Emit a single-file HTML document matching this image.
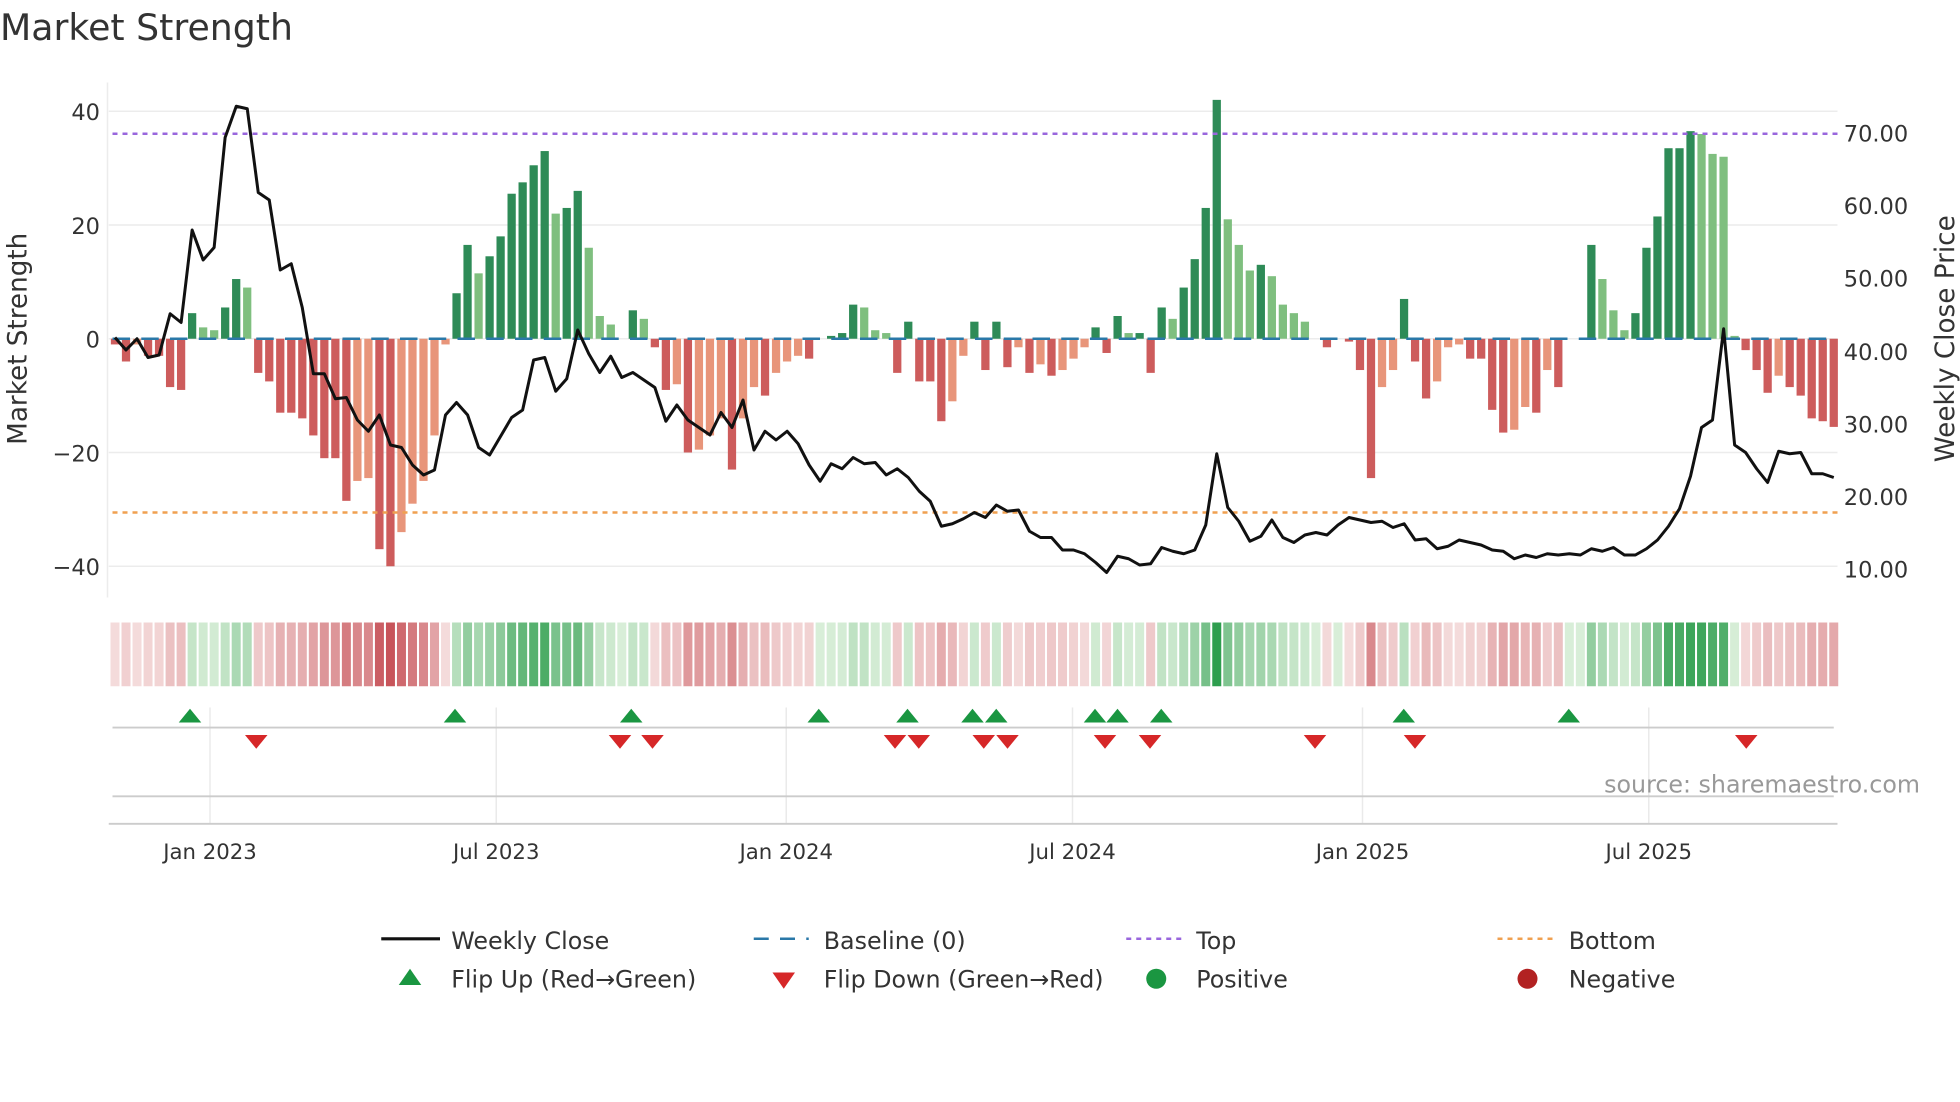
<!DOCTYPE html>
<html><head><meta charset="utf-8"><style>
html,body{margin:0;padding:0;background:#fff;width:1960px;height:1102px;overflow:hidden}
svg{display:block}
text{font-family:"DejaVu Sans","Liberation Sans",sans-serif;fill:#333}
</style></head><body>
<svg id="s" width="1960" height="1102" viewBox="0 0 1568 881.6" xmlns="http://www.w3.org/2000/svg">
<rect width="1568" height="882" fill="#fff"/>
<text x="0" y="32" font-size="29">Market Strength</text>
<g stroke="#ececec" stroke-width="1.2">
<line x1="87" y1="89" x2="1470" y2="89"/><line x1="87" y1="180" x2="1470" y2="180"/><line x1="87" y1="271" x2="1470" y2="271"/><line x1="87" y1="362" x2="1470" y2="362"/><line x1="87" y1="453" x2="1470" y2="453"/>
<line x1="86" y1="66" x2="86" y2="478"/>
</g>
<g font-size="18" text-anchor="end">
<text x="80" y="96">40</text><text x="80" y="187">20</text><text x="80" y="278">0</text><text x="80" y="369">−20</text><text x="80" y="460">−40</text>
</g>
<g font-size="18">
<text x="1475" y="113">70.00</text><text x="1475" y="171">60.00</text><text x="1475" y="229">50.00</text><text x="1475" y="288">40.00</text><text x="1475" y="346">30.00</text><text x="1475" y="404">20.00</text><text x="1475" y="462">10.00</text>
</g>
<text font-size="21" text-anchor="middle" transform="translate(21,271) rotate(-90)">Market Strength</text>
<text font-size="21" text-anchor="middle" transform="translate(1563,271) rotate(-90)">Weekly Close Price</text>
<g id="bars"></g>
<line x1="90" y1="271" x2="1470" y2="271" stroke="#2a78a8" stroke-width="2" stroke-dasharray="14,9"/>
<line x1="90" y1="107" x2="1470" y2="107" stroke="#9966dd" stroke-width="2" stroke-dasharray="4,4"/>
<line x1="90" y1="410" x2="1470" y2="410" stroke="#f0a050" stroke-width="2" stroke-dasharray="4,4"/>
<polyline id="price" fill="none" stroke="#111" stroke-width="2.4" stroke-linejoin="round"/>
<g id="heat"></g>
<g stroke="#eaeaea" stroke-width="1.2">
<line x1="168" y1="566" x2="168" y2="659"/><line x1="397" y1="566" x2="397" y2="659"/><line x1="629" y1="566" x2="629" y2="659"/><line x1="858" y1="566" x2="858" y2="659"/><line x1="1090" y1="566" x2="1090" y2="659"/><line x1="1319" y1="566" x2="1319" y2="659"/>
</g>
<line x1="90" y1="582" x2="1467" y2="582" stroke="#ccc" stroke-width="1.5"/>
<line x1="90" y1="637" x2="1467" y2="637" stroke="#ccc" stroke-width="1.5"/>
<line x1="87" y1="659" x2="1470" y2="659" stroke="#ccc" stroke-width="1.5"/>
<g id="flips"></g>
<text x="1536" y="634" font-size="19" text-anchor="end" style="fill:#999">source: sharemaestro.com</text>
<g font-size="17" text-anchor="middle">
<text x="168" y="687">Jan 2023</text><text x="397" y="687">Jul 2023</text><text x="629" y="687">Jan 2024</text><text x="858" y="687">Jul 2024</text><text x="1090" y="687">Jan 2025</text><text x="1319" y="687">Jul 2025</text>
</g>
<g font-size="19">
<line x1="305" y1="751" x2="352" y2="751" stroke="#111" stroke-width="2.5"/><text x="361" y="759">Weekly Close</text>
<line x1="603" y1="751" x2="647" y2="751" stroke="#2a78a8" stroke-width="2" stroke-dasharray="12,9"/><text x="659" y="759">Baseline (0)</text>
<line x1="901" y1="751" x2="945" y2="751" stroke="#9966dd" stroke-width="2" stroke-dasharray="4,4"/><text x="957" y="759">Top</text>
<line x1="1198" y1="751" x2="1243" y2="751" stroke="#f0a050" stroke-width="2" stroke-dasharray="4,4"/><text x="1255" y="759">Bottom</text>
<polygon points="319,788 337,788 328,775" fill="#1a9641"/><text x="361" y="790">Flip Up (Red→Green)</text>
<polygon points="618,778 636,778 627,791" fill="#d62728"/><text x="659" y="790">Flip Down (Green→Red)</text>
<circle cx="925" cy="783" r="8" fill="#1a9641"/><text x="957" y="790">Positive</text>
<circle cx="1222" cy="783" r="8" fill="#b22222"/><text x="1255" y="790">Negative</text>
</g>
</svg>
<script>
var v=[-1,-4,-1,-3,-3,-8.5,-9,4.5,2,1.5,5.5,10.5,9,-6,-7.5,-13,-13,-14,-17,-21,-21,-28.5,-25,-24.5,-37,-40,-34,-29,-25,-17,-1,8,16.5,11.5,14.5,18,25.5,27.5,30.5,33,22,23,26,16,4,2.5,0,5,3.5,-1.5,-9,-8,-20,-19.5,-17,-14,-23,-14,-8.5,-10,-6,-4,-3,-3.5,0,0.5,1,6,5.5,1.5,1,-6,3,-7.5,-7.5,-14.5,-11,-3,3,-5.5,3,-5,-1.5,-6,-4.5,-6.5,-5.5,-3.5,-1.5,2,-2.5,4,1,1,-6,5.5,3.5,9,14,23,42,21,16.5,12,13,11,6,4.5,3,0,-1.5,0,-0.5,-5.5,-24.5,-8.5,-5.5,7,-4,-10.5,-7.5,-1.5,-1,-3.5,-3.5,-12.5,-16.5,-16,-12,-13,-5.5,-8.5,0,0,16.5,10.5,5,1.5,4.5,16,21.5,33.5,33.5,36.5,36,32.5,32,0.5,-2,-5.5,-9.5,-6.5,-8.5,-10,-14,-14.5,-15.5];
var p=[270,280,271,286,284,251,258,184,208,198,110,85,87,154,160,216,211,246,299,299,319,318,336,345,332,356,358,372,380,376,332,322,332,358,364,349,334,328,288,286,313,303,264,283,298,285,302,298,304,310,337,324,336,342,348,330,342,320,360,345,352,345,355,372,385,371,375,366,371,370,380,375,382,393,401,421,419,415,410,414,404,409,408,425,430,430,440,440,443,450,458,445,447,452,451,438,441,443,440,420,363,406,417,433,429,416,430,434,428,426,428,420,414,416,418,417,422,419,432,431,439,437,432,434,436,440,441,447,444,446,443,444,443,444,439,441,438,444,444,439,432,421,407,381,342,336,263,356,362,375,386,361,363,362,379,379,382];
var dx=(1467-92)/(v.length-1);function X(i){return 92+dx*i}
var b='',h='';
function mix(a,c,t){t=Math.max(0,Math.min(1,t));return 'rgb('+a.map(function(x,k){return Math.round(x+(c[k]-x)*t)}).join(',')+')'}
for(var i=0;i<v.length;i++){var x=X(i),val=v[i],prev=i?v[i-1]:0;
 var weak=Math.abs(val)<Math.abs(prev)&&Math.sign(val)==Math.sign(prev);
 var col=val>=0?(weak?'#7fbf7f':'#2e8b57'):(weak?'#e8957a':'#cd5c5c');
 if(Math.abs(val)>0.2){var y0=271,y1=271-val*4.55;b+='<rect x="'+(x-3.3)+'" y="'+Math.min(y0,y1)+'" width="6.6" height="'+Math.abs(y1-y0)+'" fill="'+col+'"/>';}
 var hc=val>=0?mix([216,238,216],[46,158,78],val/40):mix([245,222,222],[200,84,90],-val/40);
 h+='<rect x="'+(x-3.6)+'" y="498" width="7.2" height="51" fill="'+hc+'"/>';}
document.getElementById('bars').innerHTML=b;document.getElementById('heat').innerHTML=h;
document.getElementById('price').setAttribute('points',p.map(function(y,i){return X(i).toFixed(1)+','+y}).join(' '));
var up=[152,364,505,655,726,778,797,876,894,929,1123,1255],dn=[205,496,522,716,735,787,806,884,920,1052,1132,1397],f='';
up.forEach(function(x){f+='<polygon points="'+(x-9)+',578 '+(x+9)+',578 '+x+',567" fill="#1a9641"/>'});
dn.forEach(function(x){f+='<polygon points="'+(x-9)+',588 '+(x+9)+',588 '+x+',599" fill="#d62728"/>'});
document.getElementById('flips').innerHTML=f;
</script>
</body></html>
